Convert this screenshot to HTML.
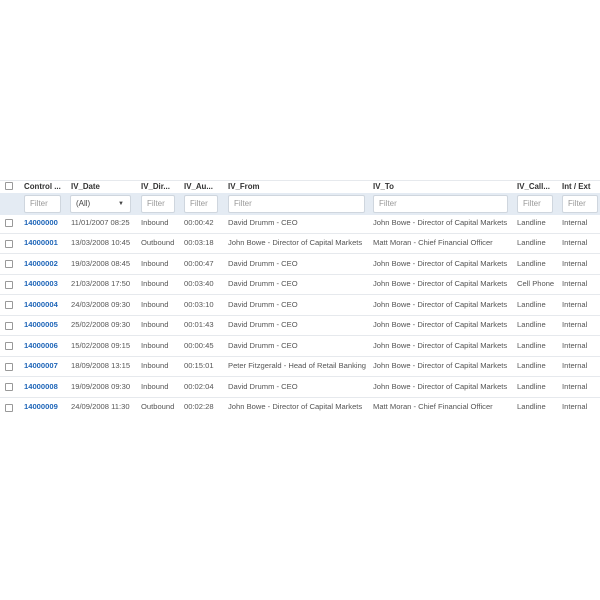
<!DOCTYPE html>
<html><head><style>
*{margin:0;padding:0;box-sizing:border-box}
body{width:600px;height:600px;background:#fff;font-family:"Liberation Sans",sans-serif;font-size:7.6px;color:#555;position:relative;overflow:hidden}
.a{position:absolute;white-space:nowrap}
.h{font-weight:bold;color:#333;top:182px;font-size:7.9px}
.cb{position:absolute;width:8px;height:8px;border:1px solid #999;border-radius:1px;background:#fff}
.in{position:absolute;top:195px;height:18px;background:#fff;border:1px solid #cfd6de;border-radius:2px;color:#999;padding-left:5px;line-height:16px;font-size:8px}
.sep{position:absolute;left:0;width:600px;height:1px;background:#e6e9ed}
.id{color:#1e65b8;font-weight:bold}
</style></head><body>
<div class="sep" style="top:180px"></div>
<div class="a" style="left:0;top:193px;width:600px;height:22px;background:#e4ebf3"></div>
<div class="cb" style="left:5px;top:182px"></div>
<div class="a h" style="left:24px">Control ...</div>
<div class="a h" style="left:71px">IV_Date</div>
<div class="a h" style="left:141px">IV_Dir...</div>
<div class="a h" style="left:184px">IV_Au...</div>
<div class="a h" style="left:228px">IV_From</div>
<div class="a h" style="left:373px">IV_To</div>
<div class="a h" style="left:517px">IV_Call...</div>
<div class="a h" style="left:562px">Int / Ext</div>
<div class="in" style="left:24px;width:37px">Filter</div>
<div class="in" style="left:70px;width:61px;color:#444">(All)<span style="position:absolute;right:6px;font-size:6px">▼</span></div>
<div class="in" style="left:141px;width:34px">Filter</div>
<div class="in" style="left:184px;width:34px">Filter</div>
<div class="in" style="left:228px;width:137px">Filter</div>
<div class="in" style="left:373px;width:135px">Filter</div>
<div class="in" style="left:517px;width:36px">Filter</div>
<div class="in" style="left:562px;width:36px">Filter</div>
<div id="rows"></div>
<script>
var d=[["14000000","11/01/2007 08:25","Inbound","00:00:42","David Drumm - CEO","John Bowe - Director of Capital Markets","Landline"],
["14000001","13/03/2008 10:45","Outbound","00:03:18","John Bowe - Director of Capital Markets","Matt Moran - Chief Financial Officer","Landline"],
["14000002","19/03/2008 08:45","Inbound","00:00:47","David Drumm - CEO","John Bowe - Director of Capital Markets","Landline"],
["14000003","21/03/2008 17:50","Inbound","00:03:40","David Drumm - CEO","John Bowe - Director of Capital Markets","Cell Phone"],
["14000004","24/03/2008 09:30","Inbound","00:03:10","David Drumm - CEO","John Bowe - Director of Capital Markets","Landline"],
["14000005","25/02/2008 09:30","Inbound","00:01:43","David Drumm - CEO","John Bowe - Director of Capital Markets","Landline"],
["14000006","15/02/2008 09:15","Inbound","00:00:45","David Drumm - CEO","John Bowe - Director of Capital Markets","Landline"],
["14000007","18/09/2008 13:15","Inbound","00:15:01","Peter Fitzgerald - Head of Retail Banking","John Bowe - Director of Capital Markets","Landline"],
["14000008","19/09/2008 09:30","Inbound","00:02:04","David Drumm - CEO","John Bowe - Director of Capital Markets","Landline"],
["14000009","24/09/2008 11:30","Outbound","00:02:28","John Bowe - Director of Capital Markets","Matt Moran - Chief Financial Officer","Landline"]];
var x=[24,71,141,184,228,373,517],h="";
d.forEach(function(r,i){var c=222.5+i*20.55;
h+='<div class="cb" style="left:5px;top:'+(c-3.5)+'px"></div>';
r.forEach(function(t,j){h+='<div class="a'+(j==0?' id':'')+'" style="left:'+x[j]+'px;top:'+(c-5)+'px">'+t+'</div>'});
h+='<div class="a" style="left:562px;top:'+(c-5)+'px">Internal</div>';
if(i<9)h+='<div class="sep" style="top:'+(c+10)+'px"></div>';});
document.getElementById("rows").innerHTML=h;
</script>
</body></html>
